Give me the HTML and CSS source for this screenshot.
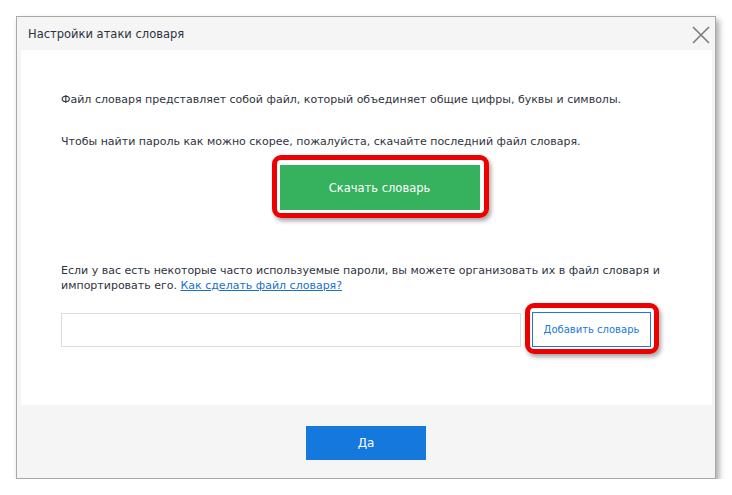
FILE: index.html
```html
<!DOCTYPE html>
<html lang="ru">
<head>
<meta charset="utf-8">
<title>Настройки атаки словаря</title>
<link rel="stylesheet" href="styles.css">
</head>
<body>
<div class="window">
  <div class="titlebar">
    <span class="title">Настройки атаки словаря</span>
    <svg class="close" width="18" height="18" viewBox="0 0 18 18"><path d="M1 1 L17 17 M17 1 L1 17" stroke="#7a7a7a" stroke-width="1.6" fill="none"/></svg>
  </div>
  <div class="panel">
    <p class="text t1">Файл словаря представляет собой файл, который объединяет общие цифры, буквы и символы.</p>
    <p class="text t2">Чтобы найти пароль как можно скорее, пожалуйста, скачайте последний файл словаря.</p>
    <div class="center">
      <button class="btn-green mark">Скачать словарь</button>
    </div>
    <p class="text t3">Если у вас есть некоторые часто используемые пароли, вы можете организовать их в файл словаря и<br>импортировать его. <a href="#" class="link">Как сделать файл словаря?</a></p>
    <div class="row">
      <div class="input"></div>
      <button class="btn-outline mark">Добавить словарь</button>
    </div>
  </div>
  <div class="footer">
    <button class="btn-blue">Да</button>
  </div>
</div>
</body>
</html>
```
FILE: styles.css
```css
* { box-sizing: border-box; }
html, body { margin: 0; padding: 0; background: #ffffff; }
body { font-family: "DejaVu Sans", sans-serif; font-size: 11px; color: #333; }
.window {
  margin: 16px 0 0 16px;
  width: 700px;
  height: 463px;
  background: #f5f5f5;
  border: 1px solid #a9a9a9;
  box-shadow: 3px 4px 6px rgba(0,0,0,0.35);
  display: flex;
  flex-direction: column;
}
.titlebar {
  height: 33px;
  display: flex;
  align-items: center;
  justify-content: space-between;
  padding: 0 5px 0 11px;
}
.title { font-size: 11.5px; color: #2c3340; }
.close { margin-top: 2px; }
.panel {
  background: #fff;
  margin: 0 3px 0 4px;
  height: 355px;
  padding: 0 14px 0 40px;
  display: flex;
  flex-direction: column;
}
.text { margin: 0; line-height: 15px; color: #2f3440; }
.t1 { margin-top: 42px; }
.t2 { margin-top: 27px; }
.center { display: flex; justify-content: center; margin-top: 16px; }
.btn-green {
  width: 200px; height: 45px;
  background: #36b25e; color: #fff; border: 0;
  font-family: inherit; font-size: 11.5px;
}
.mark { position: relative; }
.mark::after {
  content: "";
  position: absolute;
  left: -8px; right: -9px; top: -10px; bottom: -8px;
  border: 5px solid #ec0000;
  border-radius: 9px;
  box-shadow: 2px 3px 4px rgba(0,0,0,0.35);
}
.t3 { margin-top: 53px; line-height: 15px; }
.link { color: #1a6fd0; text-decoration: underline; display: inline-block; line-height: 13px; }
.row { display: flex; align-items: center; margin-top: 19px; }
.input {
  width: 460px; height: 34px;
  border: 1px solid #dcdcdc; background: #fff;
}
.btn-outline {
  margin-left: 11px;
  width: 119px; height: 35px;
  padding: 0;
  white-space: nowrap;
  background: #fff; border: 1px solid #2277dd; color: #2277dd;
  font-family: inherit; font-size: 10px;
}
.footer {
  flex: 1;
  display: flex;
  justify-content: center;
  align-items: flex-start;
  padding-top: 21px;
}
.btn-blue {
  width: 120px; height: 34px;
  background: #1478dc; color: #fff; border: 0;
  font-family: inherit; font-size: 12px;
}
```
